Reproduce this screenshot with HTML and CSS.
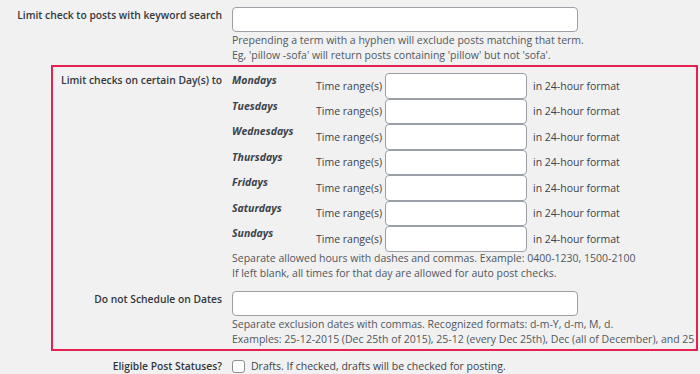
FILE: index.html
```html
<!DOCTYPE html>
<html lang="en">
<head>
    <meta charset="UTF-8">
    <meta name="viewport" content="width=device-width, initial-scale=1.0">
    <title>Auto Post Settings</title>
    <link rel="stylesheet" href="styles.css">
</head>
<body>
    <div class="form-table">
        <div class="form-row">
            <div class="row-label">Limit check to posts with keyword search</div>
            <div class="row-field">
                <input type="text" class="wide-input">
                <p class="description">Prepending a term with a hyphen will exclude posts matching that term.<br>Eg, 'pillow -sofa' will return posts containing 'pillow' but not 'sofa'.</p>
            </div>
        </div>

        <div class="highlight-box">
            <div class="form-row days-row">
                <div class="row-label">Limit checks on certain Day(s) to</div>
                <div class="row-field">
                    <div class="day-list">
                        <div class="day-row">
                            <span class="day-name">Mondays</span>
                            <span class="day-caption">Time range(s)</span>
                            <input type="text" class="time-input">
                            <span class="day-hint">in 24-hour format</span>
                        </div>
                        <div class="day-row">
                            <span class="day-name">Tuesdays</span>
                            <span class="day-caption">Time range(s)</span>
                            <input type="text" class="time-input">
                            <span class="day-hint">in 24-hour format</span>
                        </div>
                        <div class="day-row">
                            <span class="day-name">Wednesdays</span>
                            <span class="day-caption">Time range(s)</span>
                            <input type="text" class="time-input">
                            <span class="day-hint">in 24-hour format</span>
                        </div>
                        <div class="day-row">
                            <span class="day-name">Thursdays</span>
                            <span class="day-caption">Time range(s)</span>
                            <input type="text" class="time-input">
                            <span class="day-hint">in 24-hour format</span>
                        </div>
                        <div class="day-row">
                            <span class="day-name">Fridays</span>
                            <span class="day-caption">Time range(s)</span>
                            <input type="text" class="time-input">
                            <span class="day-hint">in 24-hour format</span>
                        </div>
                        <div class="day-row">
                            <span class="day-name">Saturdays</span>
                            <span class="day-caption">Time range(s)</span>
                            <input type="text" class="time-input">
                            <span class="day-hint">in 24-hour format</span>
                        </div>
                        <div class="day-row">
                            <span class="day-name">Sundays</span>
                            <span class="day-caption">Time range(s)</span>
                            <input type="text" class="time-input">
                            <span class="day-hint">in 24-hour format</span>
                        </div>
                    </div>
                    <p class="description days-note">Separate allowed hours with dashes and commas. Example: 0400-1230, 1500-2100<br>If left blank, all times for that day are allowed for auto post checks.</p>
                </div>
            </div>

            <div class="form-row dates-row">
                <div class="row-label">Do not Schedule on Dates</div>
                <div class="row-field">
                    <input type="text" class="wide-input">
                    <p class="description">Separate exclusion dates with commas. Recognized formats: d-m-Y, d-m, M, d.<br>Examples: 25-12-2015 (Dec 25th of 2015), 25-12 (every Dec 25th), Dec (all of December), and 25</p>
                </div>
            </div>
        </div>

        <div class="form-row status-row">
            <div class="row-label">Eligible Post Statuses?</div>
            <div class="row-field">
                <label class="check-label"><input type="checkbox" class="check-box"> Drafts. If checked, drafts will be checked for posting.</label>
            </div>
        </div>
    </div>
</body>
</html>
```

FILE: styles.css
```css
body, html {
    margin: 0; padding: 0; width: 100%; height: 100%; overflow: hidden;
    background: #f1f1f1; font-family: 'Open Sans', 'Noto Sans', sans-serif;
    font-size: 10.5px; color: #3c434a;
}
.form-table {
    padding-top: 7px;
}
.form-row {
    display: grid;
    grid-template-columns: 222px 346px;
    column-gap: 10px;
    align-items: start;
}
.row-label {
    text-align: right; font-weight: 600; color: #32373c;
    line-height: 16px; font-size: 10.3px;
}
.row-field {
    display: flex; flex-direction: column; align-items: flex-start;
}
.wide-input, .time-input {
    box-sizing: border-box; margin: 0; background: #fff;
    border: 1px solid #9aa0a6; border-radius: 4px;
    font: inherit;
}
.wide-input {
    width: 346px; height: 25px;
}
.description {
    margin: 1px 0 0; line-height: 15px; color: #50575e; white-space: nowrap;
}
.highlight-box {
    margin: 2px 2px 0 51px;
    border: 2px solid #e5214f;
}
.highlight-box .form-row {
    grid-template-columns: 169px auto;
}
.days-row {
    padding-top: 6px;
}
.days-row .row-label {
    margin-top: -1px;
}
.day-list {
    display: flex; flex-direction: column;
}
.day-row {
    display: flex; align-items: center; height: 25.5px;
}
.day-name {
    width: 84px; align-self: flex-start; margin-top: -1px;
    font-style: italic; font-weight: 700; line-height: 16px; color: #3c434a;
}
.day-caption {
    width: 69px;
}
.time-input {
    width: 142px; height: 25.5px;
}
.day-hint {
    margin-left: 6px;
}
.days-note {
    margin-top: -1px;
}
.dates-row {
    margin-top: 10px; padding-bottom: 2px;
}
.dates-row .description {
    margin-top: 1.5px;
}
.status-row {
    margin-top: 7px;
}
.check-label {
    display: flex; align-items: center; gap: 6px; line-height: 16px;
}
.check-box {
    appearance: none; margin: 0; width: 13px; height: 13px;
    background: #fff; border: 1px solid #8c8f94; border-radius: 3px;
}
```
